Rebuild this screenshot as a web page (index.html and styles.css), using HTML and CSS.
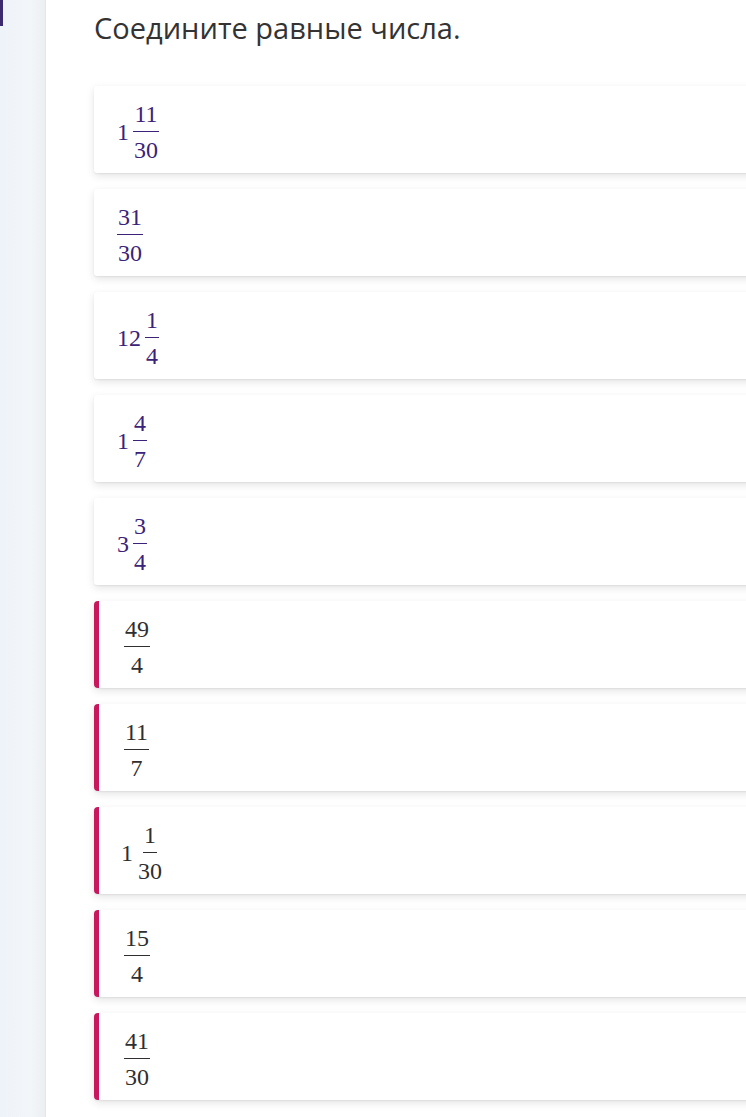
FILE: index.html
```html
<!DOCTYPE html>
<html lang="ru">
<head>
<meta charset="utf-8">
<title>Соедините равные числа</title>
<link rel="stylesheet" href="styles.css">
</head>
<body>
<div class="page">
  <aside class="sidebar"><div class="sidebar-mark"></div></aside>
  <main class="main">
    <h1 class="title">Соедините равные числа.</h1>
    <div class="cards">
      <div class="card"><span class="math mixed"><span class="whole">1</span><span class="frac"><span class="num">11</span><span class="den">30</span></span></span></div>
      <div class="card"><span class="math"><span class="frac"><span class="num">31</span><span class="den">30</span></span></span></div>
      <div class="card"><span class="math mixed"><span class="whole">12</span><span class="frac"><span class="num">1</span><span class="den">4</span></span></span></div>
      <div class="card"><span class="math mixed"><span class="whole">1</span><span class="frac"><span class="num">4</span><span class="den">7</span></span></span></div>
      <div class="card"><span class="math mixed"><span class="whole">3</span><span class="frac"><span class="num">3</span><span class="den">4</span></span></span></div>
      <div class="card card-target"><span class="math"><span class="frac"><span class="num">49</span><span class="den">4</span></span></span></div>
      <div class="card card-target"><span class="math"><span class="frac"><span class="num">11</span><span class="den">7</span></span></span></div>
      <div class="card card-target card-mixed"><span class="math mixed"><span class="whole">1</span><span class="frac"><span class="num">1</span><span class="den">30</span></span></span></div>
      <div class="card card-target"><span class="math"><span class="frac"><span class="num">15</span><span class="den">4</span></span></span></div>
      <div class="card card-target"><span class="math"><span class="frac"><span class="num">41</span><span class="den">30</span></span></span></div>
    </div>
  </main>
</div>
</body>
</html>
```

FILE: styles.css
```css
html, body {
  margin: 0;
  padding: 0;
  background: #ffffff;
  overflow: hidden;
}

.page {
  display: flex;
  min-height: 1117px;
  width: 746px;
}

.sidebar {
  width: 45px;
  flex: 0 0 45px;
  background: linear-gradient(90deg, #eef3f9 0%, #f3f6f9 70%, #eceef1 100%);
  border-right: 1px solid #e4e6e9;
}

.sidebar-mark {
  width: 3px;
  height: 26px;
  background: #3b2a6e;
}

.main {
  flex: 1;
  padding-left: 48px;
  min-width: 0;
  overflow: hidden;
}

.title {
  margin: 8px 0 0 0;
  font-family: "Open Sans", "Liberation Sans", sans-serif;
  font-weight: 400;
  font-size: 29px;
  line-height: 39px;
  color: #333333;
}

.cards {
  margin-top: 39px;
  display: flex;
  flex-direction: column;
  gap: 16px;
  width: 720px;
  padding-bottom: 20px;
}

.card {
  height: 87px;
  box-sizing: border-box;
  background: #ffffff;
  border-radius: 3px;
  box-shadow: 0 3px 9px rgba(0, 0, 0, 0.11), 0 1px 2px rgba(0, 0, 0, 0.06);
  display: flex;
  align-items: center;
  padding-left: 23px;
  padding-top: 4px;
  color: #3a2378;
}

.card-target {
  border-left: 5px solid #c8175d;
  border-radius: 4px;
  padding-left: 25px;
  color: #2f2f2f;
}

.card-target.card-mixed {
  padding-left: 22px;
}

.math {
  font-family: "Liberation Serif", "DejaVu Serif", serif;
  font-size: 24px;
  line-height: 1;
  display: inline-flex;
  align-items: center;
}

.whole {
  margin-right: 4px;
}

.frac {
  display: inline-flex;
  flex-direction: column;
  align-items: center;
}

.num, .den {
  display: block;
  padding: 0 1px;
  line-height: 24px;
}

.num {
  border-bottom: 1.4px solid currentColor;
  padding-bottom: 5px;
}

.den {
  padding-top: 6px;
}
```
